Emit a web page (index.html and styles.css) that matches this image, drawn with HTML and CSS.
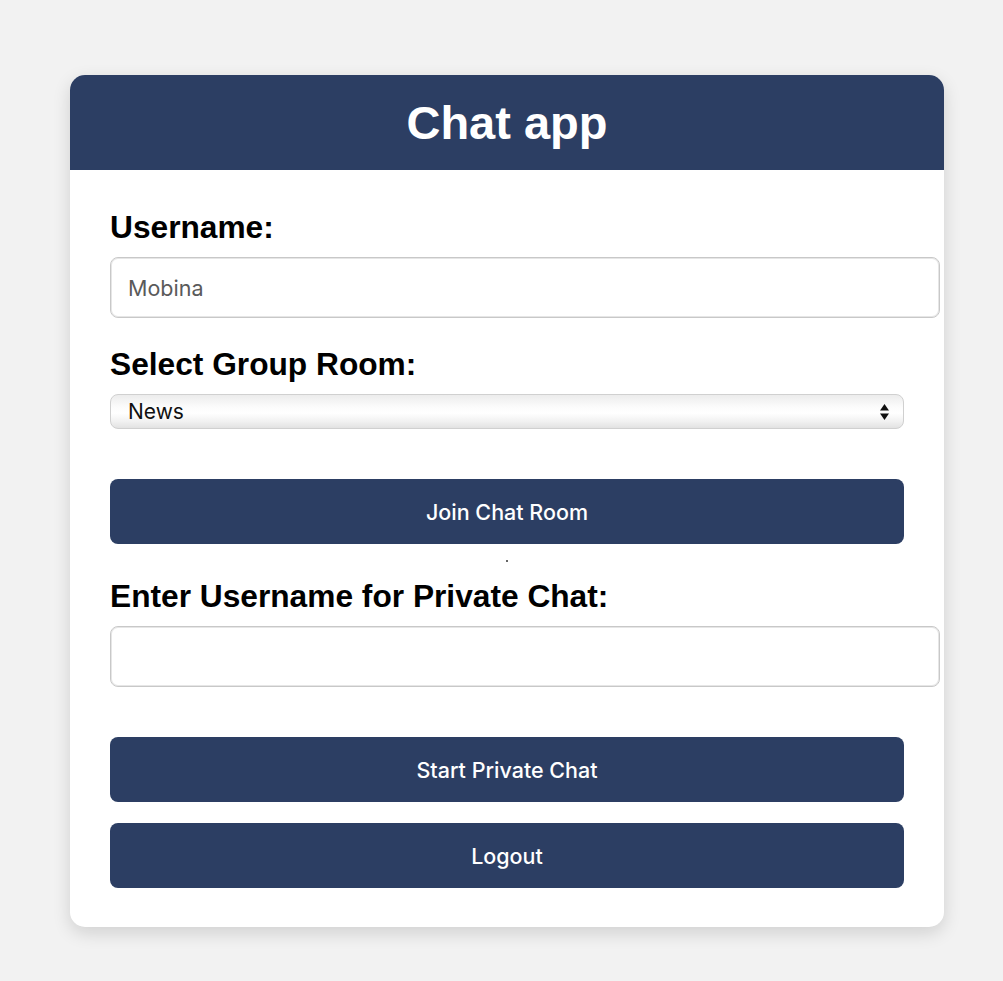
FILE: index.html
```html
<!DOCTYPE html>
<html lang="en">
<head>
<meta charset="utf-8">
<title>Chat app</title>
<link rel="stylesheet" href="styles.css">
</head>
<body>
<div class="card">
  <header class="card-header">
    <h1 class="title">Chat app</h1>
  </header>
  <div class="card-body">
    <label class="label" for="username">Username:</label>
    <input class="text-input" id="username" type="text" value="Mobina">

    <label class="label label-gap" for="room">Select Group Room:</label>
    <div class="select-wrap">
      <select class="select" id="room">
        <option>News</option>
      </select>
      <svg class="select-arrows" width="11" height="18" viewBox="0 0 11 18" aria-hidden="true">
        <path d="M5.5 1 L10 7.5 L1 7.5 Z" fill="#111"/>
        <path d="M1 10.5 L10 10.5 L5.5 17 Z" fill="#111"/>
      </svg>
    </div>

    <button class="btn btn-join" type="button">Join Chat Room</button>
    <div class="dot"></div>

    <label class="label label-private" for="private">Enter Username for Private Chat:</label>
    <input class="text-input" id="private" type="text">

    <button class="btn btn-start" type="button">Start Private Chat</button>
    <button class="btn btn-logout" type="button">Logout</button>
  </div>
</div>
</body>
</html>
```

FILE: styles.css
```css
* { box-sizing: content-box; }

html, body {
  margin: 0;
  padding: 0;
  background: #f2f2f2;
}

body {
  padding-top: 75px;
  padding-bottom: 54px;
  font-family: "Liberation Sans", Arial, sans-serif;
}

.card {
  width: 874px;
  margin-left: 70px;
  background: #ffffff;
  border-radius: 15px;
  box-shadow: 0 6px 18px rgba(0, 0, 0, 0.14);
}

.card-header {
  height: 95px;
  background: #2c3e63;
  border-radius: 15px 15px 0 0;
  display: flex;
  align-items: center;
  justify-content: center;
}

.title {
  margin: 0;
  color: #ffffff;
  font-size: 47px;
  font-weight: bold;
  line-height: 54px;
  padding-top: 1px;
}

.card-body {
  padding: 39px 40px 39px 40px;
  display: flex;
  flex-direction: column;
  align-items: flex-start;
}

.label {
  display: block;
  font-size: 31.7px;
  font-weight: bold;
  line-height: 36px;
  color: #000;
  margin-bottom: 12px;
}

.label-gap { margin-top: 28px; }
.label-private { margin-top: 16px; }

.text-input {
  width: 794px;
  height: 59px;
  padding: 0 17px;
  border: 1px solid #c8c8c8;
  border-radius: 8px;
  box-shadow: inset 0 0 0 1px #e6e6e6;
  font-family: "Inter", "Liberation Sans", sans-serif;
  font-size: 21.5px;
  color: #5a5a5a;
  background: #fff;
  outline: none;
}

.select-wrap {
  position: relative;
  width: 794px;
  height: 35px;
}

.select {
  appearance: none;
  -webkit-appearance: none;
  box-sizing: border-box;
  width: 794px;
  height: 35px;
  padding: 0 17px;
  border: 1px solid #d0d0d0;
  border-radius: 8px;
  background: linear-gradient(#ececec 0%, #fbfbfb 35%, #ffffff 55%, #f1f1f1 80%, #e2e2e2 100%);
  font-family: "Inter", "Liberation Sans", sans-serif;
  font-size: 21px;
  color: #111;
}

.select-arrows {
  position: absolute;
  right: 14px;
  top: 9px;
}

.btn {
  width: 794px;
  height: 65px;
  padding: 0;
  margin: 0;
  border: none;
  border-radius: 8px;
  background: #2c3e63;
  color: #ffffff;
  font-family: "Inter", "Liberation Sans", sans-serif;
  font-size: 21.5px;
  font-weight: 500;
  cursor: pointer;
}

.btn-join { margin-top: 50px; }
.btn-start { margin-top: 50px; }
.btn-logout { margin-top: 21px; }

.dot {
  align-self: center;
  width: 2px;
  height: 2px;
  background: #666;
  margin-top: 16px;
}
```
